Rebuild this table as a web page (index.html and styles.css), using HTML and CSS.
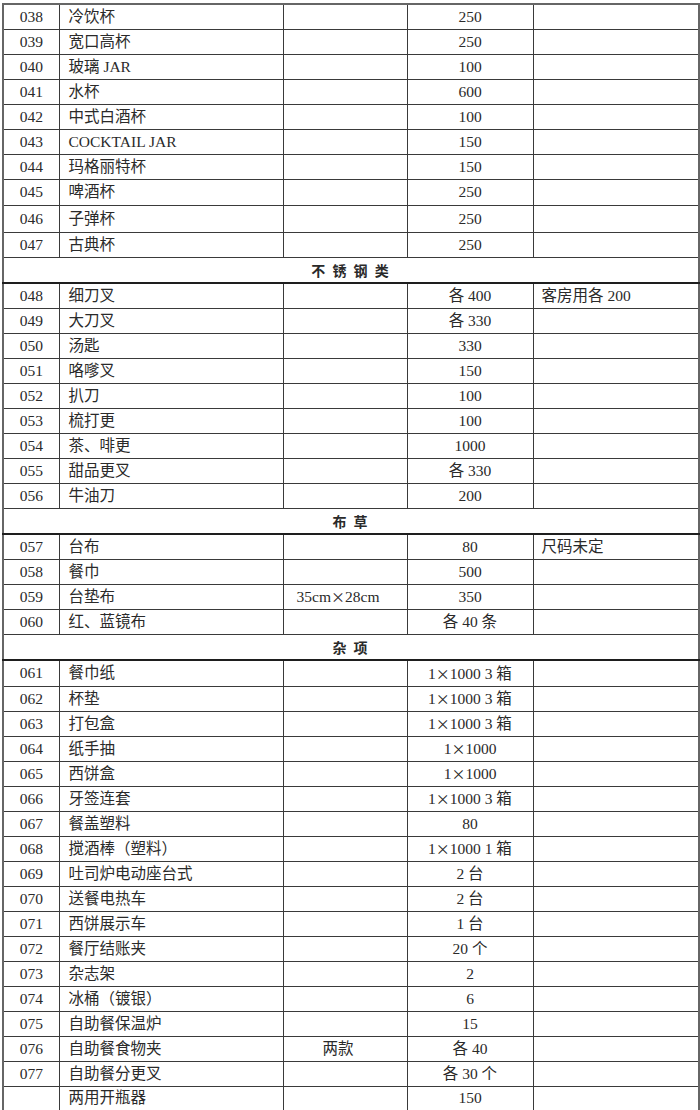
FILE: index.html
```html
<!DOCTYPE html>
<html lang="zh">
<head>
<meta charset="utf-8">
<title>物品清单</title>
<link rel="stylesheet" href="styles.css">
</head>
<body>
<table class="sheet">
<colgroup>
<col class="c-no"><col class="c-name"><col class="c-spec"><col class="c-qty"><col class="c-note">
</colgroup>
<tbody>
<tr><td class="no">038</td><td class="name">冷饮杯</td><td class="spec"></td><td class="qty">250</td><td class="note"></td></tr>
<tr><td class="no">039</td><td class="name">宽口高杯</td><td class="spec"></td><td class="qty">250</td><td class="note"></td></tr>
<tr><td class="no">040</td><td class="name">玻璃 JAR</td><td class="spec"></td><td class="qty">100</td><td class="note"></td></tr>
<tr><td class="no">041</td><td class="name">水杯</td><td class="spec"></td><td class="qty">600</td><td class="note"></td></tr>
<tr><td class="no">042</td><td class="name">中式白酒杯</td><td class="spec"></td><td class="qty">100</td><td class="note"></td></tr>
<tr><td class="no">043</td><td class="name">COCKTAIL JAR</td><td class="spec"></td><td class="qty">150</td><td class="note"></td></tr>
<tr><td class="no">044</td><td class="name">玛格丽特杯</td><td class="spec"></td><td class="qty">150</td><td class="note"></td></tr>
<tr class="mid"><td class="no">045</td><td class="name">啤酒杯</td><td class="spec"></td><td class="qty">250</td><td class="note"></td></tr>
<tr class="tall"><td class="no">046</td><td class="name">子弹杯</td><td class="spec"></td><td class="qty">250</td><td class="note"></td></tr>
<tr><td class="no">047</td><td class="name">古典杯</td><td class="spec"></td><td class="qty">250</td><td class="note"></td></tr>
<tr class="section"><td colspan="5">不 锈 钢 类</td></tr>
<tr><td class="no">048</td><td class="name">细刀叉</td><td class="spec"></td><td class="qty">各 400</td><td class="note">客房用各 200</td></tr>
<tr><td class="no">049</td><td class="name">大刀叉</td><td class="spec"></td><td class="qty">各 330</td><td class="note"></td></tr>
<tr><td class="no">050</td><td class="name">汤匙</td><td class="spec"></td><td class="qty">330</td><td class="note"></td></tr>
<tr><td class="no">051</td><td class="name">咯嗲叉</td><td class="spec"></td><td class="qty">150</td><td class="note"></td></tr>
<tr><td class="no">052</td><td class="name">扒刀</td><td class="spec"></td><td class="qty">100</td><td class="note"></td></tr>
<tr><td class="no">053</td><td class="name">梳打更</td><td class="spec"></td><td class="qty">100</td><td class="note"></td></tr>
<tr><td class="no">054</td><td class="name">茶、啡更</td><td class="spec"></td><td class="qty">1000</td><td class="note"></td></tr>
<tr><td class="no">055</td><td class="name">甜品更叉</td><td class="spec"></td><td class="qty">各 330</td><td class="note"></td></tr>
<tr><td class="no">056</td><td class="name">牛油刀</td><td class="spec"></td><td class="qty">200</td><td class="note"></td></tr>
<tr class="section"><td colspan="5">布 草</td></tr>
<tr><td class="no">057</td><td class="name">台布</td><td class="spec"></td><td class="qty">80</td><td class="note">尺码未定</td></tr>
<tr><td class="no">058</td><td class="name">餐巾</td><td class="spec"></td><td class="qty">500</td><td class="note"></td></tr>
<tr><td class="no">059</td><td class="name">台垫布</td><td class="spec">35cm<span class="x">×</span>28cm</td><td class="qty">350</td><td class="note"></td></tr>
<tr><td class="no">060</td><td class="name">红、蓝镜布</td><td class="spec"></td><td class="qty">各 40 条</td><td class="note"></td></tr>
<tr class="section"><td colspan="5">杂 项</td></tr>
<tr class="mid"><td class="no">061</td><td class="name">餐巾纸</td><td class="spec"></td><td class="qty">1<span class="x">×</span>1000 3 箱</td><td class="note"></td></tr>
<tr><td class="no">062</td><td class="name">杯垫</td><td class="spec"></td><td class="qty">1<span class="x">×</span>1000 3 箱</td><td class="note"></td></tr>
<tr><td class="no">063</td><td class="name">打包盒</td><td class="spec"></td><td class="qty">1<span class="x">×</span>1000 3 箱</td><td class="note"></td></tr>
<tr><td class="no">064</td><td class="name">纸手抽</td><td class="spec"></td><td class="qty">1<span class="x">×</span>1000</td><td class="note"></td></tr>
<tr><td class="no">065</td><td class="name">西饼盒</td><td class="spec"></td><td class="qty">1<span class="x">×</span>1000</td><td class="note"></td></tr>
<tr><td class="no">066</td><td class="name">牙签连套</td><td class="spec"></td><td class="qty">1<span class="x">×</span>1000 3 箱</td><td class="note"></td></tr>
<tr><td class="no">067</td><td class="name">餐盖塑料</td><td class="spec"></td><td class="qty">80</td><td class="note"></td></tr>
<tr><td class="no">068</td><td class="name">搅酒棒（塑料）</td><td class="spec"></td><td class="qty">1<span class="x">×</span>1000 1 箱</td><td class="note"></td></tr>
<tr><td class="no">069</td><td class="name">吐司炉电动座台式</td><td class="spec"></td><td class="qty">2 台</td><td class="note"></td></tr>
<tr><td class="no">070</td><td class="name">送餐电热车</td><td class="spec"></td><td class="qty">2 台</td><td class="note"></td></tr>
<tr><td class="no">071</td><td class="name">西饼展示车</td><td class="spec"></td><td class="qty">1 台</td><td class="note"></td></tr>
<tr><td class="no">072</td><td class="name">餐厅结账夹</td><td class="spec"></td><td class="qty">20 个</td><td class="note"></td></tr>
<tr><td class="no">073</td><td class="name">杂志架</td><td class="spec"></td><td class="qty">2</td><td class="note"></td></tr>
<tr><td class="no">074</td><td class="name">冰桶（镀银）</td><td class="spec"></td><td class="qty">6</td><td class="note"></td></tr>
<tr><td class="no">075</td><td class="name">自助餐保温炉</td><td class="spec"></td><td class="qty">15</td><td class="note"></td></tr>
<tr><td class="no">076</td><td class="name">自助餐食物夹</td><td class="spec">两款</td><td class="qty">各 40</td><td class="note"></td></tr>
<tr><td class="no">077</td><td class="name">自助餐分更叉</td><td class="spec"></td><td class="qty">各 30 个</td><td class="note"></td></tr>
<tr><td class="no"></td><td class="name">两用开瓶器</td><td class="spec"></td><td class="qty">150</td><td class="note"></td></tr>
</tbody>
</table>
</body>
</html>
```

FILE: styles.css
```css
html, body {
  margin: 0;
  padding: 0;
  background: #ffffff;
}

body {
  font-family: "Liberation Serif", "Noto Sans CJK SC", serif;
  font-size: 15.5px;
  color: #2a2a2a;
}

.sheet {
  margin: 3px 0 0 2px;
  width: 696px;
  table-layout: fixed;
  border-collapse: collapse;
  border-top: 2px solid #666;
  border-left: 2px solid #666;
  border-right: 2px solid #666;
  border-bottom: 2px solid #444;
}

.c-no { width: 56px; }
.c-name { width: 224px; }
.c-spec { width: 124px; }
.c-qty { width: 126px; }
.c-note { width: 166px; }

.sheet tr {
  height: 25px;
}

.sheet tr.tall { height: 27px; }
.sheet tr.mid { height: 26px; }

.sheet td {
  border: 1px solid #3a3a3a;
  padding: 0;
  line-height: 20px;
  vertical-align: middle;
  white-space: nowrap;
  overflow: hidden;
}

.x {
  font-family: "Noto Sans CJK SC", sans-serif;
  font-size: 14px;
}

.no {
  text-align: center;
  padding-right: 2px;
}

.name {
  padding-left: 9px !important;
}

.spec {
  text-align: center;
  padding-right: 14px !important;
}

.qty {
  text-align: center;
}

.note {
  padding-left: 8px !important;
}

.sheet tr.section {
  height: 26px;
}

.section td {
  text-align: center;
  font-weight: bold;
  font-family: "Noto Sans CJK SC", sans-serif;
  font-size: 14px;
  letter-spacing: 2px;
  border-bottom: 2px solid #1e1e1e;
}
```
